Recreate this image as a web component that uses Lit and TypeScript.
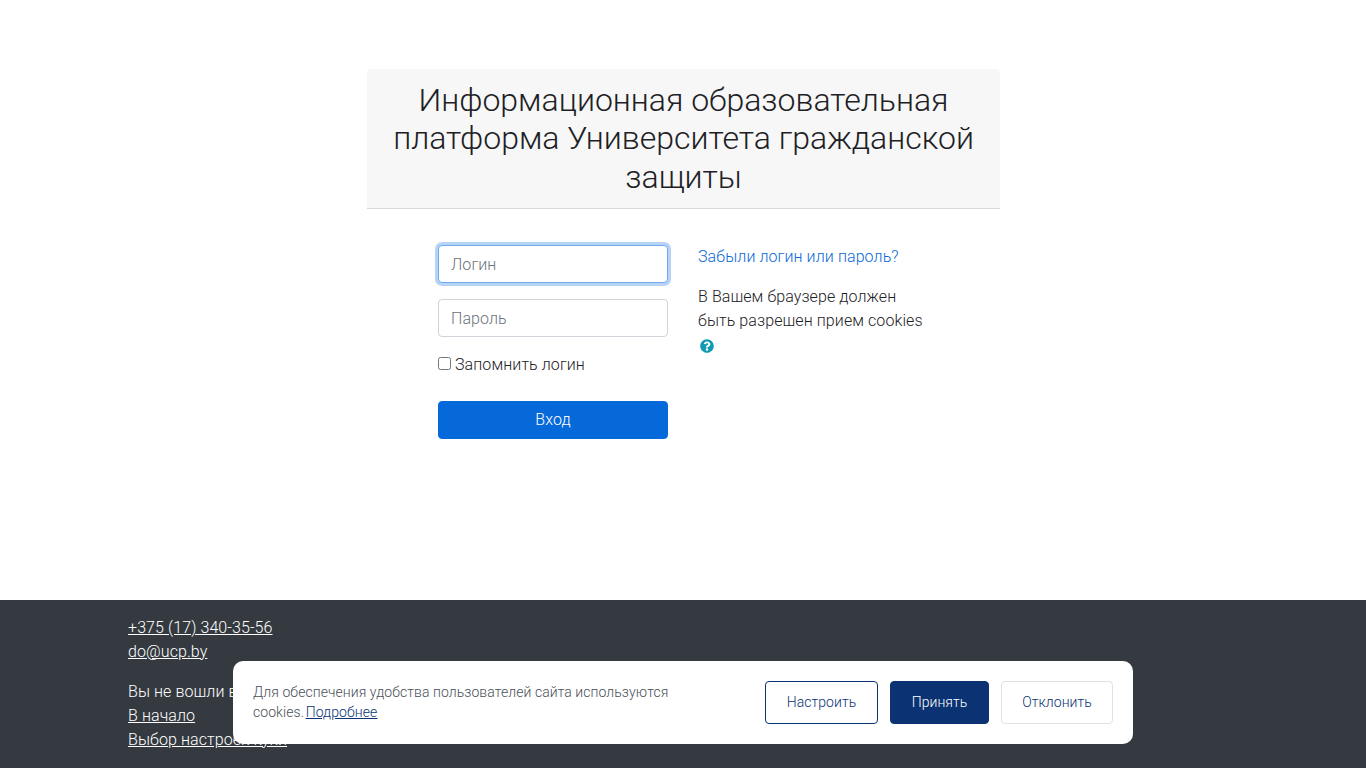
import { LitElement, html, css } from "lit";
import { customElement } from "lit/decorators.js";

@customElement("app-root")
export class AppRoot extends LitElement {
  static styles = css`
    :host {
      display: block;
      position: relative;
      height: 768px;
      overflow: hidden;
      background: #fff;
      font-family: Roboto, "Noto Sans", sans-serif;
      font-weight: 300;
      font-size: 16px;
      line-height: 24px;
      letter-spacing: 0.09px;
      color: #1d2125;
    }
    * { box-sizing: border-box; }
    .main { height: 600px; padding: 69px 0 0 367px; }
    .card { width: 633px; }
    .head {
      background: #f7f7f7;
      border-bottom: 1px solid #d9d9d9;
      border-radius: 4px 4px 0 0;
      padding: 12px 20px;
      height: 140px;
      text-align: center;
    }
    h1 { margin: 0; font-size: 32px; line-height: 38.4px; font-weight: 300; letter-spacing: 0; }
    .body { display: flex; gap: 30px; padding: 36px 0 0 71px; }
    .col { width: 230px; }
    .input {
      display: block;
      width: 230px;
      height: 38px;
      padding: 6px 12px;
      border: 1px solid #ced4da;
      border-radius: 4px;
      font: inherit;
      letter-spacing: inherit;
      color: #495057;
      background: #fff;
      outline: none;
      margin-bottom: 16px;
    }
    .input::placeholder { color: #6a737b; opacity: 1; }
    .input.focus { border-color: #6ea8f0; box-shadow: 0 0 0 3px rgba(15, 108, 221, 0.3); }
    .remember { display: flex; align-items: center; height: 24px; }
    .remember input { margin: 0 4px 0 0; width: 13px; height: 13px; position: relative; top: -2px; }
    .login {
      display: block;
      width: 230px;
      height: 38px;
      margin-top: 24px;
      border: 1px solid #0669d9;
      border-radius: 4px;
      background: #0669d9;
      color: #fff;
      font: inherit;
      letter-spacing: inherit;
    }
    .forgot { display: block; color: #0a68d8; text-decoration: none; margin: 0 0 16px; }
    .info { margin: 0; }
    .help { display: block; width: 14px; height: 14px; margin: 6px 0 0 2px; }
    .footer {
      height: 168px;
      background: #343a40;
      color: #fff;
      padding: 16px 0 0 128px;
    }
    .footer a { color: #fff; text-decoration: underline; display: block; width: max-content; }
    .gap { height: 16px; }
    .cookie {
      position: absolute;
      left: 233px;
      top: 661px;
      width: 900px;
      height: 83px;
      background: #fff;
      border-radius: 10px;
      padding: 0 20px;
      display: flex;
      align-items: center;
      justify-content: space-between;
      color: #495057;
      font-size: 14px;
      line-height: 20px;
      letter-spacing: 0.07px;
    }
    .cookie p { margin: -1px 0 0; width: 440px; }
    .cookie a { color: #0b3373; margin-left: -2px; letter-spacing: 0.1px; }
    .btns { display: flex; gap: 12px; }
    .btn {
      height: 43px;
      padding: 0 0 2px;
      border-radius: 4px;
      border: 1px solid #0b3373;
      background: #fff;
      color: #0b3373;
      font: inherit;
      letter-spacing: inherit;
    }
    .btn.setup { width: 113px; }
    .btn.primary { width: 99px; background: #0b3373; color: #fff; }
    .btn.ghost { width: 112px; border-color: #dee2e6; }
  `;

  render() {
    return html`
      <div class="main">
        <div class="card">
          <div class="head">
            <h1>Информационная образовательная платформа Университета гражданской защиты</h1>
          </div>
          <div class="body">
            <div class="col">
              <input class="input focus" placeholder="Логин" />
              <input class="input" placeholder="Пароль" />
              <label class="remember"><input type="checkbox" />Запомнить логин</label>
              <button class="login">Вход</button>
            </div>
            <div class="col">
              <a class="forgot" href="#">Забыли логин или пароль?</a>
              <p class="info">В Вашем браузере должен быть разрешен прием cookies</p>
              <svg class="help" viewBox="0 0 512 512" fill="#1299b3">
                <path d="M504 256c0 137-111 248-248 248S8 393 8 256 119 8 256 8s248 111 248 248zM262.7 90c-54.5 0-89.3 23-116.5 63.8-3.5 5.3-2.4 12.4 2.7 16.3l34.7 26.3c5.2 3.9 12.6 3 16.7-2.1 17.9-22.7 30.1-35.8 57.3-35.8 20.4 0 45.7 13.1 45.7 32.9 0 15-12.4 22.7-32.5 34-23.5 13.2-54.6 29.6-54.6 70.6V300c0 6.6 5.4 12 12 12h56c6.6 0 12-5.4 12-12v-1.3c0-28.4 83-29.6 83-106.7 0-58-60.2-102-116.5-102zM256 338c-25.4 0-46 20.6-46 46s20.6 46 46 46 46-20.6 46-46-20.6-46-46-46z"/>
              </svg>
            </div>
          </div>
        </div>
      </div>
      <div class="footer">
        <a href="#">+375 (17) 340-35-56</a>
        <a href="#">do@ucp.by</a>
        <div class="gap"></div>
        <div>Вы не вошли в систему.</div>
        <a href="#">В начало</a>
        <a href="#">Выбор настроек куки</a>
      </div>
      <div class="cookie">
        <p>Для обеспечения удобства пользователей сайта используются cookies. <a href="#">Подробнее</a></p>
        <div class="btns">
          <button class="btn setup">Настроить</button>
          <button class="btn primary">Принять</button>
          <button class="btn ghost">Отклонить</button>
        </div>
      </div>
    `;
  }
}
